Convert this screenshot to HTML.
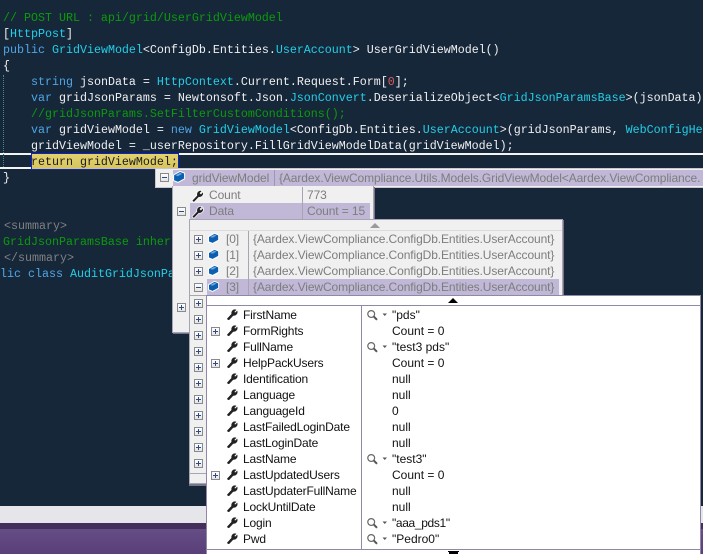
<!DOCTYPE html>
<html><head><meta charset="utf-8"><style>
html,body{margin:0;padding:0}
body{width:703px;height:554px;overflow:hidden;position:relative;background:#17273a;font-family:"Liberation Sans",sans-serif}
div{position:absolute;box-sizing:border-box}
.c{font:11.67px/16px "Liberation Mono",monospace;color:#f0f0f0;white-space:pre;left:3px;height:16px;width:700px;overflow:hidden;margin-top:1px}
.k{color:#4ea6e6}.t{color:#22cfe8}.g{color:#0a9c0a}.n{color:#e05a5a}.m{color:#808080}
.s{font-size:12px;line-height:16px;white-space:pre;height:16px;color:#7d7d7d;letter-spacing:-.1px}
.d{color:#111;letter-spacing:-.17px}
.v{letter-spacing:0}
.b{width:9px;height:9px;border:1px solid #8a8a8a;background:linear-gradient(#fff,#e4e4e4)}
.b i{position:absolute;left:1px;top:3px;width:5px;height:1px;background:#2c4a8c}
.b u{position:absolute;left:3px;top:1px;width:1px;height:5px;background:#2c4a8c}
svg{position:absolute;overflow:visible}
</style></head><body>
<svg width="0" height="0" style="left:0;top:0"><defs>
<symbol id="w" viewBox="0 0 12 12" overflow="visible"><path d="M1 11.5 L.5 10.5 L5.2 5.6 C4.6 3.2 6 .9 8.5 .8 L9.6 1 L7.6 3.1 L8.9 4.4 L11 2.4 C11.6 5 9.6 7.4 6.8 6.9 L2.2 11.6 Z" fill="#222" stroke="#222" stroke-width=".7"/></symbol>
<symbol id="ww" viewBox="0 0 12 12" overflow="visible"><path d="M1 11.5 L.5 10.5 L5.2 5.6 C4.6 3.2 6 .9 8.5 .8 L9.6 1 L7.6 3.1 L8.9 4.4 L11 2.4 C11.6 5 9.6 7.4 6.8 6.9 L2.2 11.6 Z" fill="#222" stroke="#fff" stroke-width="1.4" paint-order="stroke"/></symbol>
<symbol id="q" viewBox="0 0 12 12" overflow="visible"><path d="M.6 4 L7 .4 L11.6 2.2 L11.6 7.8 L5 11.4 L.6 9.6 Z" fill="#0c5fae" stroke="#fff" stroke-width="1"/><path d="M2.4 4.2 L7 1.9 L9.2 2.9 L4.8 5.2 Z" fill="#6ea8dc"/></symbol>
<symbol id="g" viewBox="0 0 20 10" overflow="visible"><circle cx="4.2" cy="4" r="3.4" fill="#fff" stroke="#666" stroke-width="1.2"/><path d="M6.8 6.6 L10 9.8" stroke="#555" stroke-width="2"/><path d="M15.5 3.5 H20 L17.75 6 Z" fill="#555"/></symbol>
</defs></svg>

<div style="left:0;top:506px;width:703px;height:17px;background:#e6e5ea"></div>
<div style="left:0;top:523px;width:703px;height:6px;background:#432e5c"></div>
<div style="left:0;top:529px;width:703px;height:25px;background:linear-gradient(#654d85,#5a3f78)"></div>

<div style="left:0;top:153px;width:703px;height:2px;background:#f4f4f4"></div>
<div style="left:0;top:167px;width:160px;height:2px;background:#f4f4f4"></div>
<div style="left:31px;top:153px;width:148px;height:17px;background:linear-gradient(#e2d26e,#d6c45e);border:1px solid #0a22d0"></div>
<div style="left:3px;top:75px;width:0;height:92px;border-left:1px dotted #3f8c8c"></div>

<div class="c g" style="top:9px">// POST URL : api/grid/UserGridViewModel</div>
<div class="c" style="top:25px">[<span class="t">HttpPost</span>]</div>
<div class="c" style="top:41px"><span class="k">public</span> <span class="t">GridViewModel</span>&lt;ConfigDb.Entities.<span class="t">UserAccount</span>&gt; UserGridViewModel()</div>
<div class="c" style="top:57px">{</div>
<div class="c" style="top:73px">    <span class="k">string</span> jsonData = <span class="t">HttpContext</span>.Current.Request.Form[<span class="n">0</span>];</div>
<div class="c" style="top:89px">    <span class="k">var</span> gridJsonParams = Newtonsoft.Json.<span class="t">JsonConvert</span>.DeserializeObject&lt;<span class="t">GridJsonParamsBase</span>&gt;(jsonData)</div>
<div class="c g" style="top:105px">    //gridJsonParams.SetFilterCustomConditions();</div>
<div class="c" style="top:121px">    <span class="k">var</span> gridViewModel = <span class="k">new</span> <span class="t">GridViewModel</span>&lt;ConfigDb.Entities.<span class="t">UserAccount</span>&gt;(gridJsonParams, <span class="t">WebConfigHe</span></div>
<div class="c" style="top:137px">    gridViewModel = _userRepository.FillGridViewModelData(gridViewModel);</div>
<div class="c" style="top:153px;color:#1a1a1a">    return gridViewModel;</div>
<div class="c" style="top:169px">}</div>
<div class="c m" style="top:217px;left:4px;width:160px">&lt;summary&gt;</div>
<div class="c g" style="top:233px;width:169px;overflow:hidden">GridJsonParamsBase inher</div>
<div class="c m" style="top:249px;left:4px;width:160px">&lt;/summary&gt;</div>
<div class="c" style="top:265px;left:0;width:172px"><span class="k">lic class</span> <span class="t">AuditGridJsonPa</span></div>

<!-- top tip -->
<div style="left:155px;top:168px;width:548px;height:20px;background:#f0f0f0;border:1px solid #c9c6d0;border-right:0"></div>
<div style="left:173px;top:170px;width:530px;height:16px;background:#c0b8d6"></div>
<div class="b" style="left:160px;top:173px"><i></i></div>
<svg style="left:173px;top:171px" width="12" height="12"><use href="#q" width="12" height="12"/></svg>
<div class="s" style="left:192px;top:170px">gridViewModel</div>
<div style="left:274px;top:170px;width:1px;height:16px;background:#9c96ae"></div>
<div class="s" style="left:279px;top:170px;width:424px;overflow:hidden">{Aardex.ViewCompliance.Utils.Models.GridViewModel&lt;Aardex.ViewCompliance.</div>

<!-- panel 2 -->
<div style="left:172px;top:186px;width:202px;height:147px;background:#f0f0f0;border:1px solid #a8a4b4;border-top:0;box-shadow:1px 1px 0 #77738a"></div>
<div style="left:190px;top:203px;width:180px;height:16px;background:#c0b8d6"></div>
<div style="left:302px;top:187px;width:1px;height:32px;background:#a8a4b4"></div>
<svg style="left:192px;top:190px" width="12" height="12"><use href="#ww" width="12" height="12"/></svg>
<svg style="left:192px;top:206px" width="12" height="12"><use href="#ww" width="12" height="12"/></svg>
<div class="s" style="left:209px;top:187px">Count</div>
<div class="s" style="left:307px;top:187px">773</div>
<div class="s" style="left:209px;top:203px">Data</div>
<div class="s" style="left:307px;top:203px">Count = 15</div>
<div class="b" style="left:177px;top:207px"><i></i></div>
<div class="b" style="left:177px;top:303px"><i></i><u></u></div>

<!-- panel 3 -->
<div style="left:189px;top:219px;width:374px;height:77px;background:#f0f0f0;border:1px solid #a8a4b4;box-shadow:1px 1px 0 #77738a"></div>
<div style="left:189px;top:296px;width:18px;height:188px;background:#f0f0f0;border-left:1px solid #a8a4b4;border-bottom:1px solid #a8a4b4;box-shadow:0 2px 0 #77738a"></div>
<div style="left:189px;top:473px;width:18px;height:1px;background:#a8a4b4"></div>
<div style="left:190px;top:230px;width:372px;height:1px;background:#dcdcdc"></div>
<div style="left:370px;top:223px;width:0;height:0;border-left:5px solid transparent;border-right:5px solid transparent;border-bottom:5px solid #9a9a9a"></div>
<div style="left:207px;top:279px;width:352px;height:16px;background:#c0b8d6"></div>
<div style="left:248px;top:231px;width:1px;height:64px;background:#a8a4b4"></div>
<div class="s" style="left:226px;top:231px">[0]</div><div class="s" style="left:253px;top:231px">{Aardex.ViewCompliance.ConfigDb.Entities.UserAccount}</div>
<div class="s" style="left:226px;top:247px">[1]</div><div class="s" style="left:253px;top:247px">{Aardex.ViewCompliance.ConfigDb.Entities.UserAccount}</div>
<div class="s" style="left:226px;top:263px">[2]</div><div class="s" style="left:253px;top:263px">{Aardex.ViewCompliance.ConfigDb.Entities.UserAccount}</div>
<div class="s" style="left:226px;top:279px">[3]</div><div class="s" style="left:253px;top:279px">{Aardex.ViewCompliance.ConfigDb.Entities.UserAccount}</div>
<svg style="left:208px;top:233px" width="11" height="11"><use href="#q" width="11" height="11"/></svg>
<svg style="left:208px;top:249px" width="11" height="11"><use href="#q" width="11" height="11"/></svg>
<svg style="left:208px;top:265px" width="11" height="11"><use href="#q" width="11" height="11"/></svg>
<svg style="left:208px;top:281px" width="11" height="11"><use href="#q" width="11" height="11"/></svg>
<div class="b" style="left:194px;top:235px"><i></i><u></u></div>
<div class="b" style="left:194px;top:251px"><i></i><u></u></div>
<div class="b" style="left:194px;top:267px"><i></i><u></u></div>
<div class="b" style="left:194px;top:283px"><i></i></div>
<div class="b" style="left:194px;top:299px"><i></i><u></u></div>
<div class="b" style="left:194px;top:315px"><i></i><u></u></div>
<div class="b" style="left:194px;top:331px"><i></i><u></u></div>
<div class="b" style="left:194px;top:347px"><i></i><u></u></div>
<div class="b" style="left:194px;top:363px"><i></i><u></u></div>
<div class="b" style="left:194px;top:379px"><i></i><u></u></div>
<div class="b" style="left:194px;top:395px"><i></i><u></u></div>
<div class="b" style="left:194px;top:411px"><i></i><u></u></div>
<div class="b" style="left:194px;top:427px"><i></i><u></u></div>
<div class="b" style="left:194px;top:443px"><i></i><u></u></div>
<div class="b" style="left:194px;top:459px"><i></i><u></u></div>

<!-- panel 4 -->
<div style="left:206px;top:295px;width:495px;height:259px;background:#fff;border:1px solid #8f88a6;border-bottom:0"></div>
<div style="left:207px;top:305px;width:493px;height:1px;background:#8f88a6"></div>
<div style="left:207px;top:549px;width:493px;height:1px;background:#8f88a6"></div>
<div style="left:361px;top:306px;width:1px;height:243px;background:#8f88a6"></div>
<div style="left:448px;top:298px;width:0;height:0;border-left:5px solid transparent;border-right:5px solid transparent;border-bottom:5px solid #000"></div>
<div style="left:448px;top:551px;width:11px;height:1px;background:#000"></div>
<div style="left:449px;top:552px;width:9px;height:2px;background:#000"></div>

<div class="s d" style="left:243px;top:307px">FirstName</div><div class="s d v" style="left:392px;top:307px">"pds"</div>
<div class="s d" style="left:243px;top:323px">FormRights</div><div class="s d v" style="left:392px;top:323px">Count = 0</div>
<div class="s d" style="left:243px;top:339px">FullName</div><div class="s d v" style="left:392px;top:339px">"test3 pds"</div>
<div class="s d" style="left:243px;top:355px">HelpPackUsers</div><div class="s d v" style="left:392px;top:355px">Count = 0</div>
<div class="s d" style="left:243px;top:371px">Identification</div><div class="s d v" style="left:392px;top:371px">null</div>
<div class="s d" style="left:243px;top:387px">Language</div><div class="s d v" style="left:392px;top:387px">null</div>
<div class="s d" style="left:243px;top:403px">LanguageId</div><div class="s d v" style="left:392px;top:403px">0</div>
<div class="s d" style="left:243px;top:419px">LastFailedLoginDate</div><div class="s d v" style="left:392px;top:419px">null</div>
<div class="s d" style="left:243px;top:435px">LastLoginDate</div><div class="s d v" style="left:392px;top:435px">null</div>
<div class="s d" style="left:243px;top:451px">LastName</div><div class="s d v" style="left:392px;top:451px">"test3"</div>
<div class="s d" style="left:243px;top:467px">LastUpdatedUsers</div><div class="s d v" style="left:392px;top:467px">Count = 0</div>
<div class="s d" style="left:243px;top:483px">LastUpdaterFullName</div><div class="s d v" style="left:392px;top:483px">null</div>
<div class="s d" style="left:243px;top:499px">LockUntilDate</div><div class="s d v" style="left:392px;top:499px">null</div>
<div class="s d" style="left:243px;top:515px">Login</div><div class="s d" style="left:392px;top:515px;letter-spacing:-.35px">"aaa_pds1"</div>
<div class="s d" style="left:243px;top:531px">Pwd</div><div class="s d v" style="left:392px;top:531px">"Pedro0"</div>

<svg style="left:227px;top:309px" width="11" height="11"><use href="#w" width="11" height="11"/></svg>
<svg style="left:227px;top:325px" width="11" height="11"><use href="#w" width="11" height="11"/></svg>
<svg style="left:227px;top:341px" width="11" height="11"><use href="#w" width="11" height="11"/></svg>
<svg style="left:227px;top:357px" width="11" height="11"><use href="#w" width="11" height="11"/></svg>
<svg style="left:227px;top:373px" width="11" height="11"><use href="#w" width="11" height="11"/></svg>
<svg style="left:227px;top:389px" width="11" height="11"><use href="#w" width="11" height="11"/></svg>
<svg style="left:227px;top:405px" width="11" height="11"><use href="#w" width="11" height="11"/></svg>
<svg style="left:227px;top:421px" width="11" height="11"><use href="#w" width="11" height="11"/></svg>
<svg style="left:227px;top:437px" width="11" height="11"><use href="#w" width="11" height="11"/></svg>
<svg style="left:227px;top:453px" width="11" height="11"><use href="#w" width="11" height="11"/></svg>
<svg style="left:227px;top:469px" width="11" height="11"><use href="#w" width="11" height="11"/></svg>
<svg style="left:227px;top:485px" width="11" height="11"><use href="#w" width="11" height="11"/></svg>
<svg style="left:227px;top:501px" width="11" height="11"><use href="#w" width="11" height="11"/></svg>
<svg style="left:227px;top:517px" width="11" height="11"><use href="#w" width="11" height="11"/></svg>
<svg style="left:227px;top:533px" width="11" height="11"><use href="#w" width="11" height="11"/></svg>

<div class="b" style="left:211px;top:327px"><i></i><u></u></div>
<div class="b" style="left:211px;top:359px"><i></i><u></u></div>
<div class="b" style="left:211px;top:471px"><i></i><u></u></div>

<svg style="left:367px;top:310px" width="20" height="10"><use href="#g" width="20" height="10"/></svg>
<svg style="left:367px;top:342px" width="20" height="10"><use href="#g" width="20" height="10"/></svg>
<svg style="left:367px;top:454px" width="20" height="10"><use href="#g" width="20" height="10"/></svg>
<svg style="left:367px;top:518px" width="20" height="10"><use href="#g" width="20" height="10"/></svg>
<svg style="left:367px;top:534px" width="20" height="10"><use href="#g" width="20" height="10"/></svg>
</body></html>
